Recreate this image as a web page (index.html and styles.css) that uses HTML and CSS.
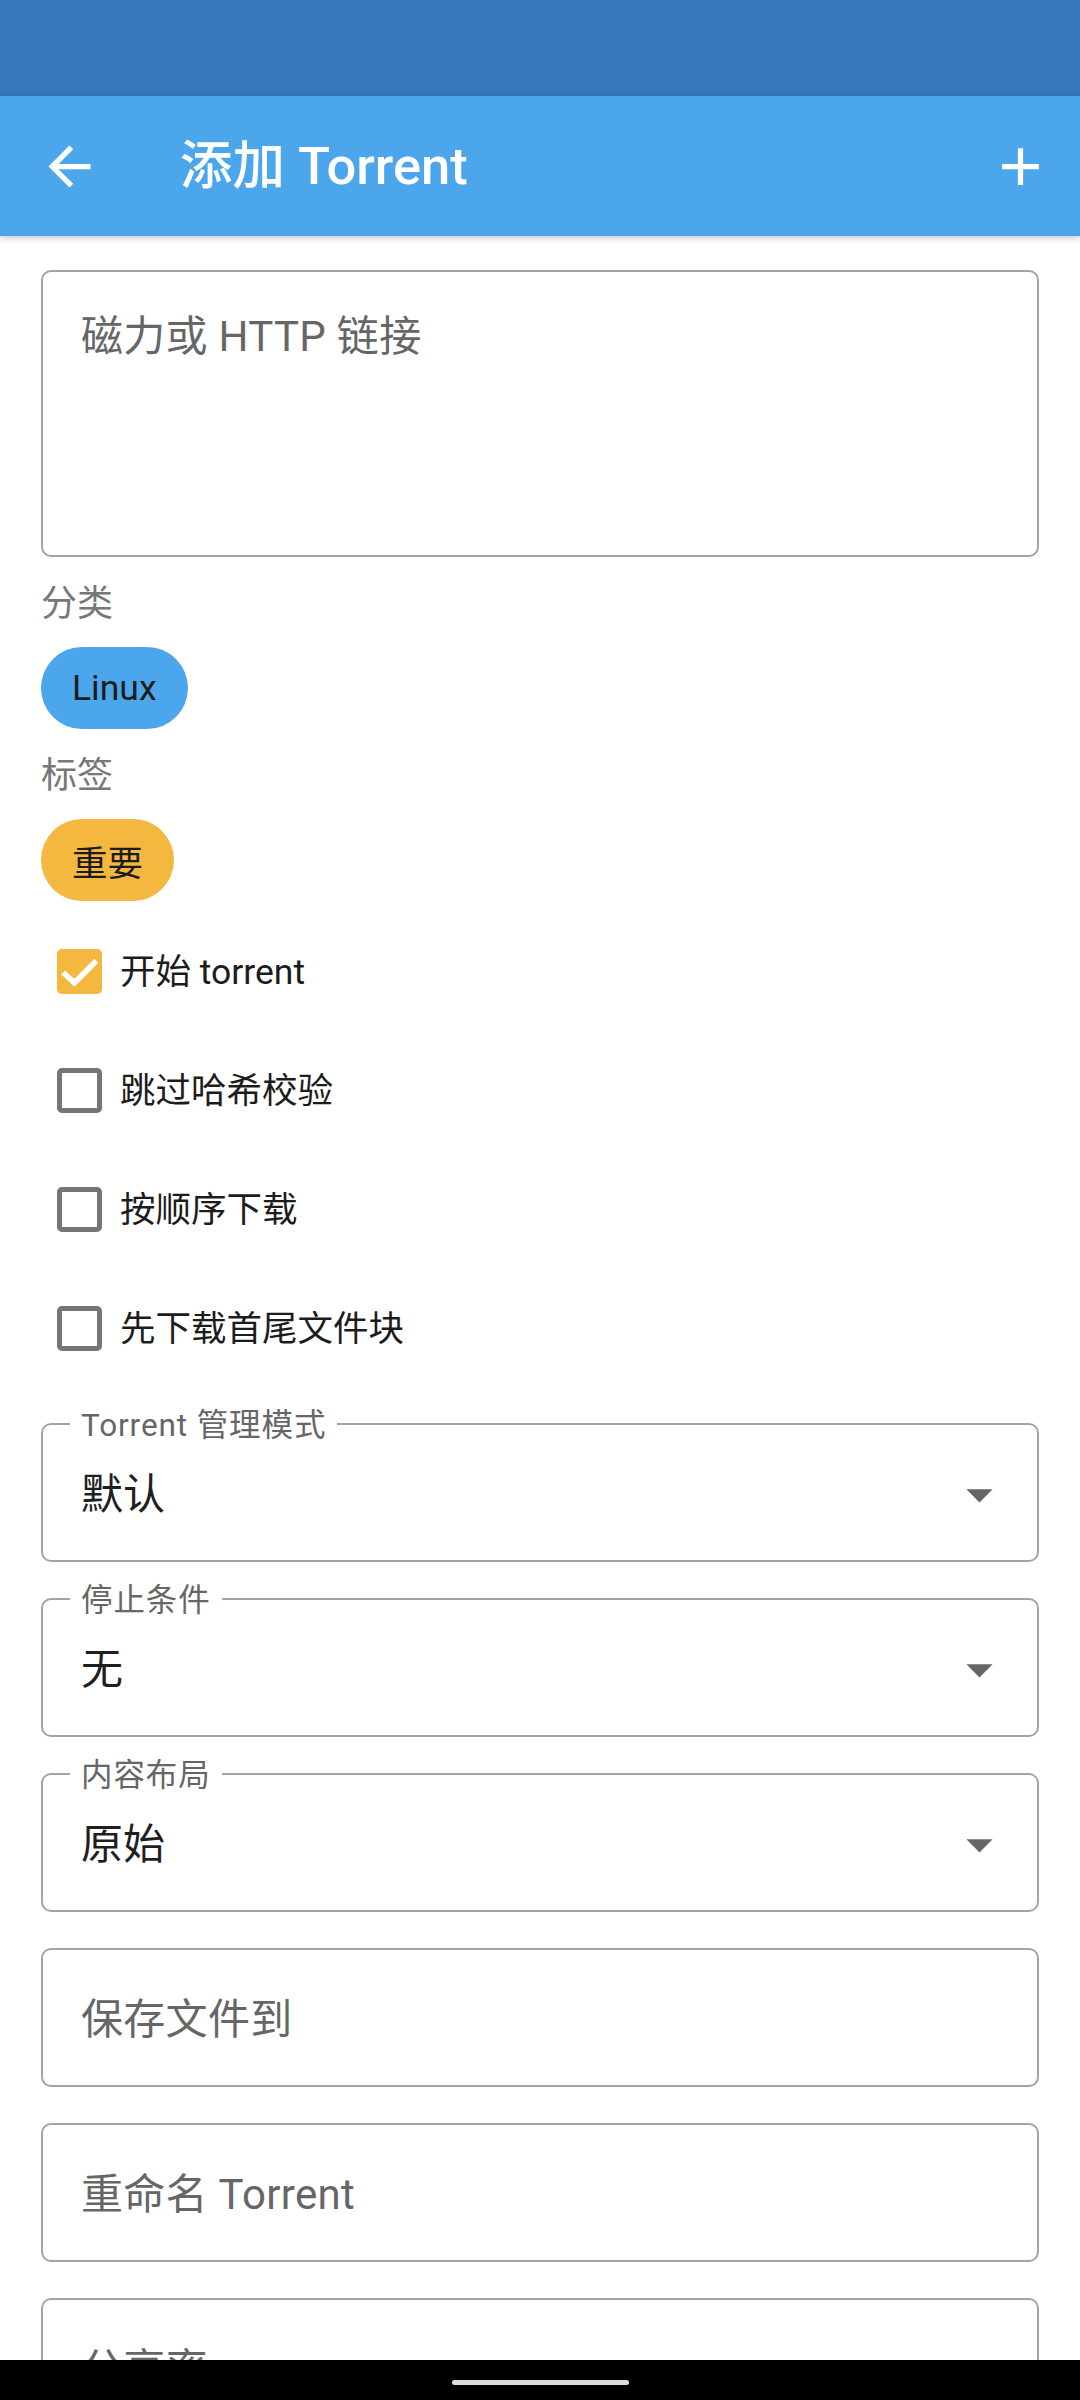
FILE: index.html
```html
<!DOCTYPE html>
<html lang="zh-CN">
<head>
<meta charset="utf-8">
<title>添加 Torrent</title>
<link rel="stylesheet" href="styles.css">
</head>
<body>
<div class="status-bar"></div>
<header class="app-bar">
  <svg class="icon" viewBox="0 0 24 24"><path d="M20 11H7.83l5.59-5.59L12 4l-8 8 8 8 1.41-1.41L7.83 13H20v-2z"/></svg>
  <h1 class="title">添加 Torrent</h1>
  <svg class="icon" viewBox="0 0 24 24"><path d="M19 13h-6v6h-2v-6H5v-2h6V5h2v6h6v2z"/></svg>
</header>
<main class="content">
  <div class="textarea"><span class="placeholder">磁力或 HTTP 链接</span></div>

  <div class="section-label">分类</div>
  <div class="chips"><span class="chip chip-blue">Linux</span></div>

  <div class="section-label">标签</div>
  <div class="chips"><span class="chip chip-amber">重要</span></div>

  <ul class="checks">
    <li class="check-row">
      <span class="checkbox checked"><svg viewBox="0 0 44 44"><polyline points="6,23 17,33 38.5,11.5"/></svg></span>
      <span class="check-label">开始 torrent</span>
    </li>
    <li class="check-row">
      <span class="checkbox"></span>
      <span class="check-label">跳过哈希校验</span>
    </li>
    <li class="check-row">
      <span class="checkbox"></span>
      <span class="check-label">按顺序下载</span>
    </li>
    <li class="check-row">
      <span class="checkbox"></span>
      <span class="check-label">先下载首尾文件块</span>
    </li>
  </ul>

  <div class="fields">
    <div class="field">
      <span class="field-label">Torrent 管理模式</span>
      <span class="value">默认</span>
      <svg class="arrow" viewBox="0 0 24 24"><path d="M7 10l5 5 5-5z"/></svg>
    </div>
    <div class="field">
      <span class="field-label">停止条件</span>
      <span class="value">无</span>
      <svg class="arrow" viewBox="0 0 24 24"><path d="M7 10l5 5 5-5z"/></svg>
    </div>
    <div class="field">
      <span class="field-label">内容布局</span>
      <span class="value">原始</span>
      <svg class="arrow" viewBox="0 0 24 24"><path d="M7 10l5 5 5-5z"/></svg>
    </div>
    <div class="field"><span class="placeholder">保存文件到</span></div>
    <div class="field"><span class="placeholder">重命名 Torrent</span></div>
    <div class="field"><span class="placeholder">分享率</span></div>
  </div>
</main>
<div class="nav-bar"><span class="home-indicator"></span></div>
</body>
</html>
```

FILE: styles.css
```css
* { box-sizing: border-box; }

html, body {
  margin: 0;
  padding: 0;
  height: 2400px;
  overflow: hidden;
}

body {
  display: flex;
  flex-direction: column;
  background: #ffffff;
  font-family: Roboto, "Noto Sans CJK SC", sans-serif;
  color: #212121;
}

.status-bar {
  height: 96px;
  flex: none;
  background: #3477bd;
}

.app-bar {
  height: 140px;
  flex: none;
  display: flex;
  align-items: center;
  padding: 0 28px 0 38px;
  background: #4ca6ec;
  box-shadow: 0 2px 6px rgba(0, 0, 0, 0.22);
  position: relative;
  z-index: 2;
}

.icon {
  width: 63px;
  height: 63px;
  fill: #ffffff;
  flex: none;
}

.title {
  flex: 1;
  margin: 0 0 0 79px;
  font-size: 52.5px;
  font-weight: 500;
  color: #ffffff;
  line-height: 1;
  white-space: nowrap;
}

.content {
  flex: 1;
  min-height: 0;
  overflow: hidden;
  padding: 34px 41px 0;
}

.textarea {
  height: 287px;
  border: 2px solid #a4a4a4;
  border-radius: 10px;
  padding: 37px 38px 0;
}

.placeholder {
  font-size: 42px;
  line-height: 56px;
  letter-spacing: 0.3px;
  color: #666666;
}

.section-label {
  margin-top: 23px;
  font-size: 36px;
  line-height: 48px;
  color: #777777;
}

.chips {
  margin-top: 19px;
  display: flex;
}

.chip {
  height: 82px;
  border-radius: 41px;
  padding: 0 31px;
  display: flex;
  align-items: center;
  font-size: 35.5px;
  color: #1c1c1c;
}

.chip-blue { background: #4ca6ec; }
.chip-amber { background: #f4b73f; }

.checks {
  list-style: none;
  margin: 11px 0 0;
  padding: 0;
}

.check-row {
  height: 119px;
  display: flex;
  align-items: center;
  padding-left: 16px;
  gap: 18px;
}

.checkbox {
  width: 45px;
  height: 45px;
  border: 5px solid #757575;
  border-radius: 5px;
  flex: none;
  display: flex;
}

.checkbox.checked {
  background: #f4b73f;
  border: none;
}

.checkbox svg {
  width: 45px;
  height: 45px;
  fill: none;
  stroke: #ffffff;
  stroke-width: 5.5;
}

.check-label {
  font-size: 35.5px;
  line-height: 48px;
  color: #1c1c1c;
}

.fields {
  margin-top: 35px;
  display: flex;
  flex-direction: column;
  gap: 36px;
}

.field {
  position: relative;
  height: 139px;
  flex: none;
  border: 2px solid #a4a4a4;
  border-radius: 10px;
  display: flex;
  align-items: center;
  padding: 4px 26px 0 38px;
}

.field-label {
  position: absolute;
  left: 27px;
  top: -17px;
  padding: 0 11px;
  background: #ffffff;
  font-size: 31.5px;
  line-height: 36px;
  letter-spacing: 0.9px;
  color: #666666;
  white-space: nowrap;
}

.value {
  flex: 1;
  font-size: 42px;
  line-height: 56px;
  color: #1f1f1f;
}

.arrow {
  width: 63px;
  height: 63px;
  fill: #666666;
  flex: none;
}

.nav-bar {
  height: 40px;
  flex: none;
  background: #000000;
  display: flex;
  justify-content: center;
  padding-top: 20px;
}

.home-indicator {
  width: 177px;
  height: 5px;
  border-radius: 3px;
  background: #dddddd;
}
```
